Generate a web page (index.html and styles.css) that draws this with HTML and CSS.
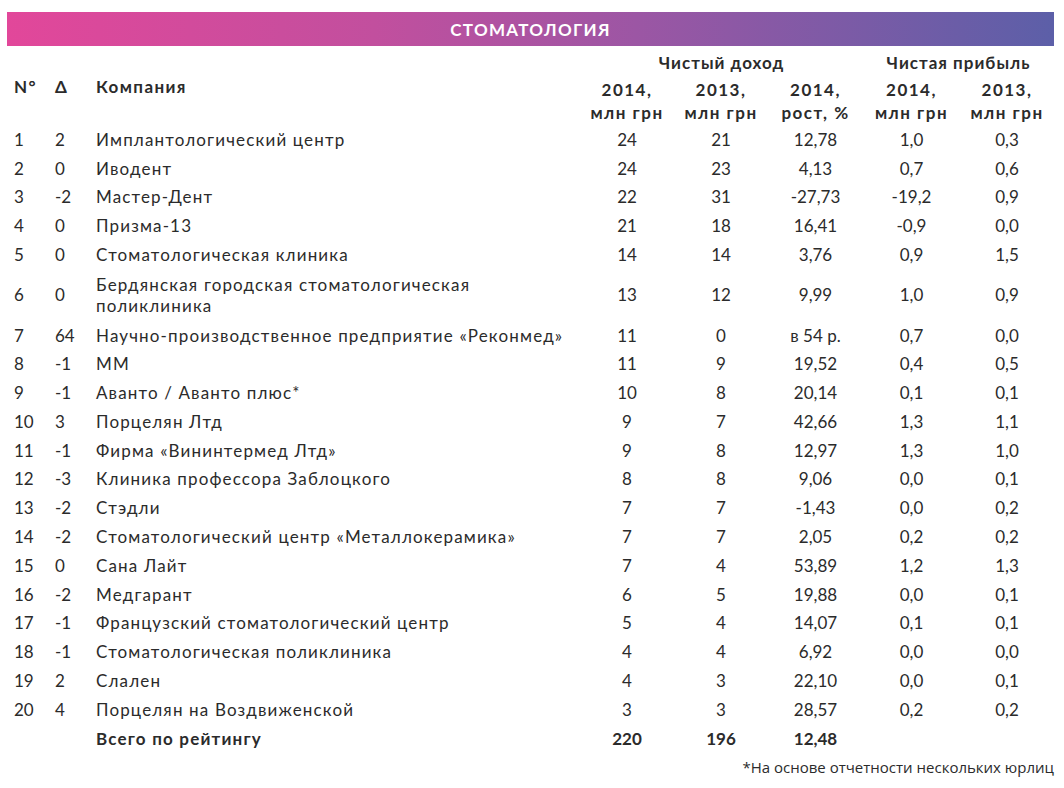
FILE: index.html
```html
<!DOCTYPE html>
<html lang="ru">
<head>
<meta charset="utf-8">
<title>Стоматология</title>
<link rel="stylesheet" href="styles.css">
</head>
<body>
<div class="page">
  <div class="banner">СТОМАТОЛОГИЯ</div>
  <table class="rating">
    <colgroup>
      <col class="c-no"><col class="c-d"><col class="c-name">
      <col class="c-v1"><col class="c-v2"><col class="c-v3"><col class="c-v4"><col class="c-v5">
    </colgroup>
    <thead>
      <tr class="hrow-a">
        <th rowspan="2" class="l">N°</th>
        <th rowspan="2" class="l">Δ</th>
        <th rowspan="2" class="l">Компания</th>
        <th colspan="3">Чистый доход</th>
        <th colspan="2">Чистая прибыль</th>
      </tr>
      <tr class="hrow-b">
        <th>2014,<br>млн грн</th>
        <th>2013,<br>млн грн</th>
        <th>2014,<br>рост, %</th>
        <th>2014,<br>млн грн</th>
        <th>2013,<br>млн грн</th>
      </tr>
    </thead>
    <tbody>
      <tr><td>1</td><td>2</td><td>Имплантологический центр</td><td>24</td><td>21</td><td>12,78</td><td>1,0</td><td>0,3</td></tr>
      <tr><td>2</td><td>0</td><td>Иводент</td><td>24</td><td>23</td><td>4,13</td><td>0,7</td><td>0,6</td></tr>
      <tr><td>3</td><td>-2</td><td>Мастер-Дент</td><td>22</td><td>31</td><td>-27,73</td><td>-19,2</td><td>0,9</td></tr>
      <tr><td>4</td><td>0</td><td>Призма-13</td><td>21</td><td>18</td><td>16,41</td><td>-0,9</td><td>0,0</td></tr>
      <tr><td>5</td><td>0</td><td>Стоматологическая клиника</td><td>14</td><td>14</td><td>3,76</td><td>0,9</td><td>1,5</td></tr>
      <tr class="two"><td>6</td><td>0</td><td>Бердянская городская стоматологическая<br>поликлиника</td><td>13</td><td>12</td><td>9,99</td><td>1,0</td><td>0,9</td></tr>
      <tr><td>7</td><td>64</td><td>Научно-производственное предприятие «Реконмед»</td><td>11</td><td>0</td><td>в 54 р.</td><td>0,7</td><td>0,0</td></tr>
      <tr><td>8</td><td>-1</td><td>ММ</td><td>11</td><td>9</td><td>19,52</td><td>0,4</td><td>0,5</td></tr>
      <tr><td>9</td><td>-1</td><td>Аванто / Аванто плюс*</td><td>10</td><td>8</td><td>20,14</td><td>0,1</td><td>0,1</td></tr>
      <tr><td>10</td><td>3</td><td>Порцелян Лтд</td><td>9</td><td>7</td><td>42,66</td><td>1,3</td><td>1,1</td></tr>
      <tr><td>11</td><td>-1</td><td>Фирма «Вининтермед Лтд»</td><td>9</td><td>8</td><td>12,97</td><td>1,3</td><td>1,0</td></tr>
      <tr><td>12</td><td>-3</td><td>Клиника профессора Заблоцкого</td><td>8</td><td>8</td><td>9,06</td><td>0,0</td><td>0,1</td></tr>
      <tr><td>13</td><td>-2</td><td>Стэдли</td><td>7</td><td>7</td><td>-1,43</td><td>0,0</td><td>0,2</td></tr>
      <tr><td>14</td><td>-2</td><td>Стоматологический центр «Металлокерамика»</td><td>7</td><td>7</td><td>2,05</td><td>0,2</td><td>0,2</td></tr>
      <tr><td>15</td><td>0</td><td>Сана Лайт</td><td>7</td><td>4</td><td>53,89</td><td>1,2</td><td>1,3</td></tr>
      <tr><td>16</td><td>-2</td><td>Медгарант</td><td>6</td><td>5</td><td>19,88</td><td>0,0</td><td>0,1</td></tr>
      <tr><td>17</td><td>-1</td><td>Французский стоматологический центр</td><td>5</td><td>4</td><td>14,07</td><td>0,1</td><td>0,1</td></tr>
      <tr><td>18</td><td>-1</td><td>Стоматологическая поликлиника</td><td>4</td><td>4</td><td>6,92</td><td>0,0</td><td>0,0</td></tr>
      <tr><td>19</td><td>2</td><td>Слален</td><td>4</td><td>3</td><td>22,10</td><td>0,0</td><td>0,1</td></tr>
      <tr><td>20</td><td>4</td><td>Порцелян на Воздвиженской</td><td>3</td><td>3</td><td>28,57</td><td>0,2</td><td>0,2</td></tr>
      <tr class="total"><td></td><td></td><td>Всего по рейтингу</td><td>220</td><td>196</td><td>12,48</td><td></td><td></td></tr>
    </tbody>
  </table>
  <p class="note">*На основе отчетности нескольких юрлиц</p>
</div>
</body>
</html>
```

FILE: styles.css
```css
html, body {
  margin: 0;
  padding: 0;
  background: #ffffff;
}

.page {
  width: 1064px;
  padding: 12px 10px 0 7px;
  box-sizing: border-box;
  font-family: "Lato", "Open Sans", sans-serif;
  color: #2b2b2b;
}

.banner {
  height: 34px;
  line-height: 36px;
  background: linear-gradient(90deg, #e2479a 0%, #c24f9e 35%, #9c56a4 60%, #5c5fa8 100%);
  color: #ffffff;
  font-weight: 700;
  font-size: 17px;
  letter-spacing: 1.3px;
  text-align: center;
}

.rating {
  width: 1047px;
  border-collapse: collapse;
  table-layout: fixed;
  margin-top: 4px;
  font-size: 17px;
}

.c-no { width: 41px; }
.c-d { width: 41px; }
.c-name { width: 491px; }
.c-v1 { width: 94px; }
.c-v2 { width: 94px; }
.c-v3 { width: 95px; }
.c-v4 { width: 97px; }
.c-v5 { width: 94px; }

.rating th {
  font-weight: 700;
  text-align: center;
  line-height: 23px;
  padding: 0;
  vertical-align: middle;
  letter-spacing: 1.4px;
}

.rating th.l {
  text-align: left;
  padding-left: 7px;
  padding-bottom: 2px;
}

.hrow-a th {
  height: 24px;
  letter-spacing: 1px;
}

.hrow-a th.l {
  letter-spacing: 1.4px;
}

.hrow-b th {
  height: 46px;
  padding-top: 3.5px;
  padding-bottom: 1.5px;
  letter-spacing: 1.5px;
}

.rating td {
  line-height: 21px;
  padding: 3.9px 0;
  text-align: center;
  vertical-align: middle;
}

.rating tr.two td {
  padding-top: 4.9px;
  padding-bottom: 4.9px;
}

.rating td:nth-child(1),
.rating td:nth-child(2),
.rating td:nth-child(3) {
  text-align: left;
  padding-left: 7px;
}

.rating td:nth-child(3) {
  letter-spacing: 1.15px;
}

.rating tr.total td {
  font-weight: 700;
}

.rating tr.total td:nth-child(3) {
  letter-spacing: 1.2px;
}

.note {
  margin: 5px 0 0;
  text-align: right;
  font-family: "Open Sans", "Noto Sans", sans-serif;
  font-size: 15px;
  color: #2b2b2b;
}
```
